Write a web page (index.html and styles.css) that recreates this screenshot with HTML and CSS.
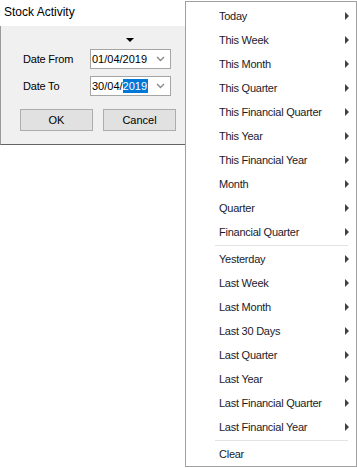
FILE: index.html
```html
<!DOCTYPE html>
<html lang="en">
<head>
    <meta charset="UTF-8">
    <title>Stock Activity</title>
    <link rel="stylesheet" href="styles.css">
</head>
<body>
    <div class="screen">
        <div class="dialog">
            <div class="title">Stock Activity</div>
            <div class="dialog-body">
                <div class="drop-row"><span class="drop-arrow"></span></div>
                <div class="field">
                    <label>Date From</label>
                    <div class="date-box">
                        <span class="date-text">01/04/2019</span>
                        <svg class="chevron" width="9" height="6" viewBox="0 0 9 6"><path d="M1 1 L4.5 4.5 L8 1" fill="none" stroke="#8a8a8a" stroke-width="1.4"/></svg>
                    </div>
                </div>
                <div class="field">
                    <label>Date To</label>
                    <div class="date-box">
                        <span class="date-text">30/04/<span class="selected">2019</span></span>
                        <svg class="chevron" width="9" height="6" viewBox="0 0 9 6"><path d="M1 1 L4.5 4.5 L8 1" fill="none" stroke="#8a8a8a" stroke-width="1.4"/></svg>
                    </div>
                </div>
                <div class="actions">
                    <button>OK</button>
                    <button>Cancel</button>
                </div>
            </div>
        </div>

        <div class="menu">
            <div class="item"><span>Today</span><span class="sub"></span></div>
            <div class="item"><span>This Week</span><span class="sub"></span></div>
            <div class="item"><span>This Month</span><span class="sub"></span></div>
            <div class="item"><span>This Quarter</span><span class="sub"></span></div>
            <div class="item"><span>This Financial Quarter</span><span class="sub"></span></div>
            <div class="item"><span>This Year</span><span class="sub"></span></div>
            <div class="item"><span>This Financial Year</span><span class="sub"></span></div>
            <div class="item"><span>Month</span><span class="sub"></span></div>
            <div class="item"><span>Quarter</span><span class="sub"></span></div>
            <div class="item"><span>Financial Quarter</span><span class="sub"></span></div>
            <div class="separator"></div>
            <div class="item"><span>Yesterday</span><span class="sub"></span></div>
            <div class="item"><span>Last Week</span><span class="sub"></span></div>
            <div class="item"><span>Last Month</span><span class="sub"></span></div>
            <div class="item"><span>Last 30 Days</span><span class="sub"></span></div>
            <div class="item"><span>Last Quarter</span><span class="sub"></span></div>
            <div class="item"><span>Last Year</span><span class="sub"></span></div>
            <div class="item"><span>Last Financial Quarter</span><span class="sub"></span></div>
            <div class="item"><span>Last Financial Year</span><span class="sub"></span></div>
            <div class="separator"></div>
            <div class="item"><span>Clear</span></div>
        </div>
    </div>
</body>
</html>
```

FILE: styles.css
```css
* {
    box-sizing: border-box;
    margin: 0;
    padding: 0;
}

body {
    background-color: #ffffff;
    font-family: 'Liberation Sans', Arial, sans-serif;
    font-size: 11px;
    color: #000000;
}

.screen {
    display: flex;
    align-items: flex-start;
    width: 357px;
    height: 468px;
}

/* dialog */

.dialog {
    width: 185px;
}

.title {
    height: 26px;
    padding: 5px 0 0 4px;
    font-size: 12px;
    background-color: #ffffff;
}

.dialog-body {
    background-color: #f0f0f0;
    border-left: 1px solid #9a9a9a;
    border-bottom: 1px solid #646464;
    padding: 0 0 13px 22px;
}

.drop-row {
    height: 23px;
    padding: 12px 0 0 103px;
}

.drop-arrow {
    display: block;
    width: 0;
    height: 0;
    border-left: 4px solid transparent;
    border-right: 4px solid transparent;
    border-top: 4px solid #000000;
}

.field {
    display: flex;
    align-items: center;
    height: 20px;
    margin-bottom: 7px;
}

.field label {
    width: 67px;
    letter-spacing: -0.2px;
}

.date-box {
    width: 81px;
    height: 20px;
    background-color: #ffffff;
    border: 1px solid #a5a5a5;
    display: flex;
    align-items: center;
    justify-content: space-between;
    padding: 0 5px 0 1px;
}

.date-text {
    line-height: 14px;
}

.selected {
    background-color: #0078d7;
    color: #ffffff;
    padding: 1px 1px 1px 0;
}

.actions {
    display: flex;
    gap: 10px;
    margin-top: 13px;
    margin-left: -3px;
}

.actions button {
    width: 73px;
    height: 22px;
    background-color: #e1e1e1;
    border: 1px solid #adadad;
    font-family: 'Liberation Sans', Arial, sans-serif;
    font-size: 11px;
    color: #000000;
}

/* context menu */

.menu {
    width: 172px;
    height: 466px;
    margin-top: 1px;
    background-color: #ffffff;
    border: 1px solid #a0a0a0;
    padding: 2px 0 0;
}

.item {
    height: 24px;
    display: flex;
    align-items: center;
    justify-content: space-between;
    padding: 0 7px 0 33px;
    color: #1a1a2a;
    letter-spacing: -0.25px;
}

.sub {
    width: 0;
    height: 0;
    border-top: 4px solid transparent;
    border-bottom: 4px solid transparent;
    border-left: 4px solid #404040;
}

.separator {
    height: 2px;
    margin: 1px 8px 0 29px;
    border-top: 1px solid #e3e3e3;
}
```
